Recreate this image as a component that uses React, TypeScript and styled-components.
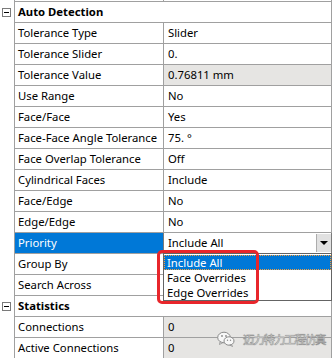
import styled, { createGlobalStyle } from 'styled-components';

type Row = {
  label: string;
  value?: string;
  readOnly?: boolean;
  selected?: boolean;
  combo?: boolean;
};

type Section = { title: string; rows: Row[] };

const SECTIONS: Section[] = [
  {
    title: 'Auto Detection',
    rows: [
      { label: 'Tolerance Type', value: 'Slider' },
      { label: 'Tolerance Slider', value: '0.' },
      { label: 'Tolerance Value', value: '0.76811 mm', readOnly: true },
      { label: 'Use Range', value: 'No' },
      { label: 'Face/Face', value: 'Yes' },
      { label: 'Face-Face Angle Tolerance', value: '75. °' },
      { label: 'Face Overlap Tolerance', value: 'Off' },
      { label: 'Cylindrical Faces', value: 'Include' },
      { label: 'Face/Edge', value: 'No' },
      { label: 'Edge/Edge', value: 'No' },
      { label: 'Priority', value: 'Include All', selected: true, combo: true },
      { label: 'Group By', value: '' },
      { label: 'Search Across', value: '' },
    ],
  },
  {
    title: 'Statistics',
    rows: [
      { label: 'Connections', value: '0', readOnly: true },
      { label: 'Active Connections', value: '0', readOnly: true },
    ],
  },
];

const OPTIONS = ['Include All', 'Face Overrides', 'Edge Overrides'];

const GlobalStyle = createGlobalStyle`
  body {
    margin: 0;
    background: #fff;
    font-family: "Noto Sans", "Open Sans", sans-serif;
    font-size: 11.3px;
    color: #000;
  }
`;

const Grid = styled.div`
  position: relative;
  width: 332px;
  height: 358px;
  overflow: hidden;
  background: #fff;
`;

const RowLine = styled.div<{ $h?: number }>`
  display: grid;
  grid-template-columns: 15px 149px 168px;
  height: ${(p) => p.$h ?? 21}px;
`;

const Gutter = styled.div`
  border-right: 1px solid #a0a0a0;
  display: flex;
  align-items: center;
  justify-content: center;
  padding-right: 2px;
`;

const Expander = styled.div`
  position: relative;
  width: 9px;
  height: 9px;
  box-sizing: border-box;
  border: 1px solid #7a7a7a;
  background: #fff;
  &::after {
    content: '';
    position: absolute;
    left: 1px;
    top: 3px;
    width: 5px;
    height: 1px;
    background: #000;
  }
`;

const Cell = styled.div`
  border-bottom: 1px solid #a0a0a0;
  line-height: 20px;
  white-space: nowrap;
  overflow: hidden;
`;

const HeaderCell = styled(Cell)`
  grid-column: 2 / 4;
  font-weight: 700;
  padding-left: 3px;
  border-right: 1px solid #a0a0a0;
`;

const Label = styled(Cell)<{ $selected?: boolean }>`
  padding-left: 3px;
  border-right: 1px solid #a0a0a0;
  background: ${(p) => (p.$selected ? '#0078d7' : '#fff')};
  color: ${(p) => (p.$selected ? '#fff' : '#000')};
`;

const Value = styled(Cell)<{ $readOnly?: boolean }>`
  padding-left: 4px;
  border-right: 1px solid #a0a0a0;
  background: ${(p) => (p.$readOnly ? '#e6e5e3' : '#fff')};
`;

const ComboCell = styled(Cell)`
  display: flex;
  margin-left: -1px;
  border: 1px solid #7a7a7a;
  border-top: none;
  background: #fff;
`;

const ComboText = styled.div`
  flex: 1;
  padding-left: 4px;
  line-height: 19px;
`;

const ComboButton = styled.div`
  width: 14px;
  margin: 1px 0;
  background: #e1e1e1;
  border-left: 1px solid #adadad;
  display: flex;
  align-items: center;
  justify-content: center;
  &::after {
    content: '';
    border-left: 4px solid transparent;
    border-right: 4px solid transparent;
    border-top: 4px solid #000;
  }
`;

const DropList = styled.div`
  position: absolute;
  left: 163px;
  top: 253px;
  width: 169px;
  height: 48px;
  box-sizing: border-box;
  border: 1px solid #646464;
  background: #fff;
  padding-top: 1px;
`;

const Option = styled.div<{ $active?: boolean }>`
  height: 15px;
  line-height: 15px;
  padding-left: 3px;
  overflow: hidden;
  background: ${(p) => (p.$active ? '#0078d7' : 'transparent')};
  color: ${(p) => (p.$active ? '#fff' : '#000')};
  outline: ${(p) => (p.$active ? '1px dotted #f5a03c' : 'none')};
  outline-offset: -1px;
`;

const Callout = styled.div`
  position: absolute;
  left: 157px;
  top: 250px;
  width: 102px;
  height: 54px;
  box-sizing: border-box;
  border: 3px solid #e8262b;
  border-radius: 5px;
`;

const Watermark = styled.div`
  position: absolute;
  left: 217px;
  top: 331px;
  display: flex;
  align-items: center;
  gap: 8px;
  pointer-events: none;
`;

const WatermarkText = styled.span`
  font-family: "Noto Sans CJK SC", sans-serif;
  font-size: 11.5px;
  letter-spacing: -1.2px;
  color: #f4f4f4;
  -webkit-text-stroke: 0.4px #8c8c8c;
  text-shadow: 0 0 1px #7a7a7a;
`;

function WeChatIcon() {
  return (
    <svg width="18" height="16" viewBox="0 0 18 16">
      <ellipse cx="7" cy="6.5" rx="6.3" ry="5.3" fill="#f7f7f7" stroke="#8a8a8a" strokeWidth="1" />
      <path d="M3 11 L2.5 13.5 L6 11.5 Z" fill="#f7f7f7" stroke="#8a8a8a" strokeWidth="0.8" />
      <ellipse cx="12" cy="10" rx="5" ry="4.2" fill="#f7f7f7" stroke="#8a8a8a" strokeWidth="1" />
      <path d="M14.5 13.5 L15.5 15.5 L12.8 14 Z" fill="#f7f7f7" stroke="#8a8a8a" strokeWidth="0.8" />
      <circle cx="5" cy="5" r="0.9" fill="#8a8a8a" />
      <circle cx="9" cy="5" r="0.9" fill="#8a8a8a" />
      <circle cx="10.5" cy="9.3" r="0.7" fill="#8a8a8a" />
      <circle cx="13.5" cy="9.3" r="0.7" fill="#8a8a8a" />
    </svg>
  );
}

export default function App() {
  return (
    <>
      <GlobalStyle />
      <Grid>
        <RowLine $h={2}>
          <Gutter />
          <Label />
          <Value />
        </RowLine>
        {SECTIONS.map((s) => (
          <div key={s.title}>
            <RowLine>
              <Gutter>
                <Expander />
              </Gutter>
              <HeaderCell>{s.title}</HeaderCell>
            </RowLine>
            {s.rows.map((r) => (
              <RowLine key={r.label}>
                <Gutter />
                <Label $selected={r.selected}>{r.label}</Label>
                {r.combo ? (
                  <ComboCell>
                    <ComboText>{r.value}</ComboText>
                    <ComboButton />
                  </ComboCell>
                ) : (
                  <Value $readOnly={r.readOnly}>{r.value}</Value>
                )}
              </RowLine>
            ))}
          </div>
        ))}
        <DropList>
          {OPTIONS.map((o, i) => (
            <Option key={o} $active={i === 0}>
              {o}
            </Option>
          ))}
        </DropList>
        <Callout />
        <Watermark>
          <WeChatIcon />
          <WatermarkText>迈力特力工程仿真</WatermarkText>
        </Watermark>
      </Grid>
    </>
  );
}
